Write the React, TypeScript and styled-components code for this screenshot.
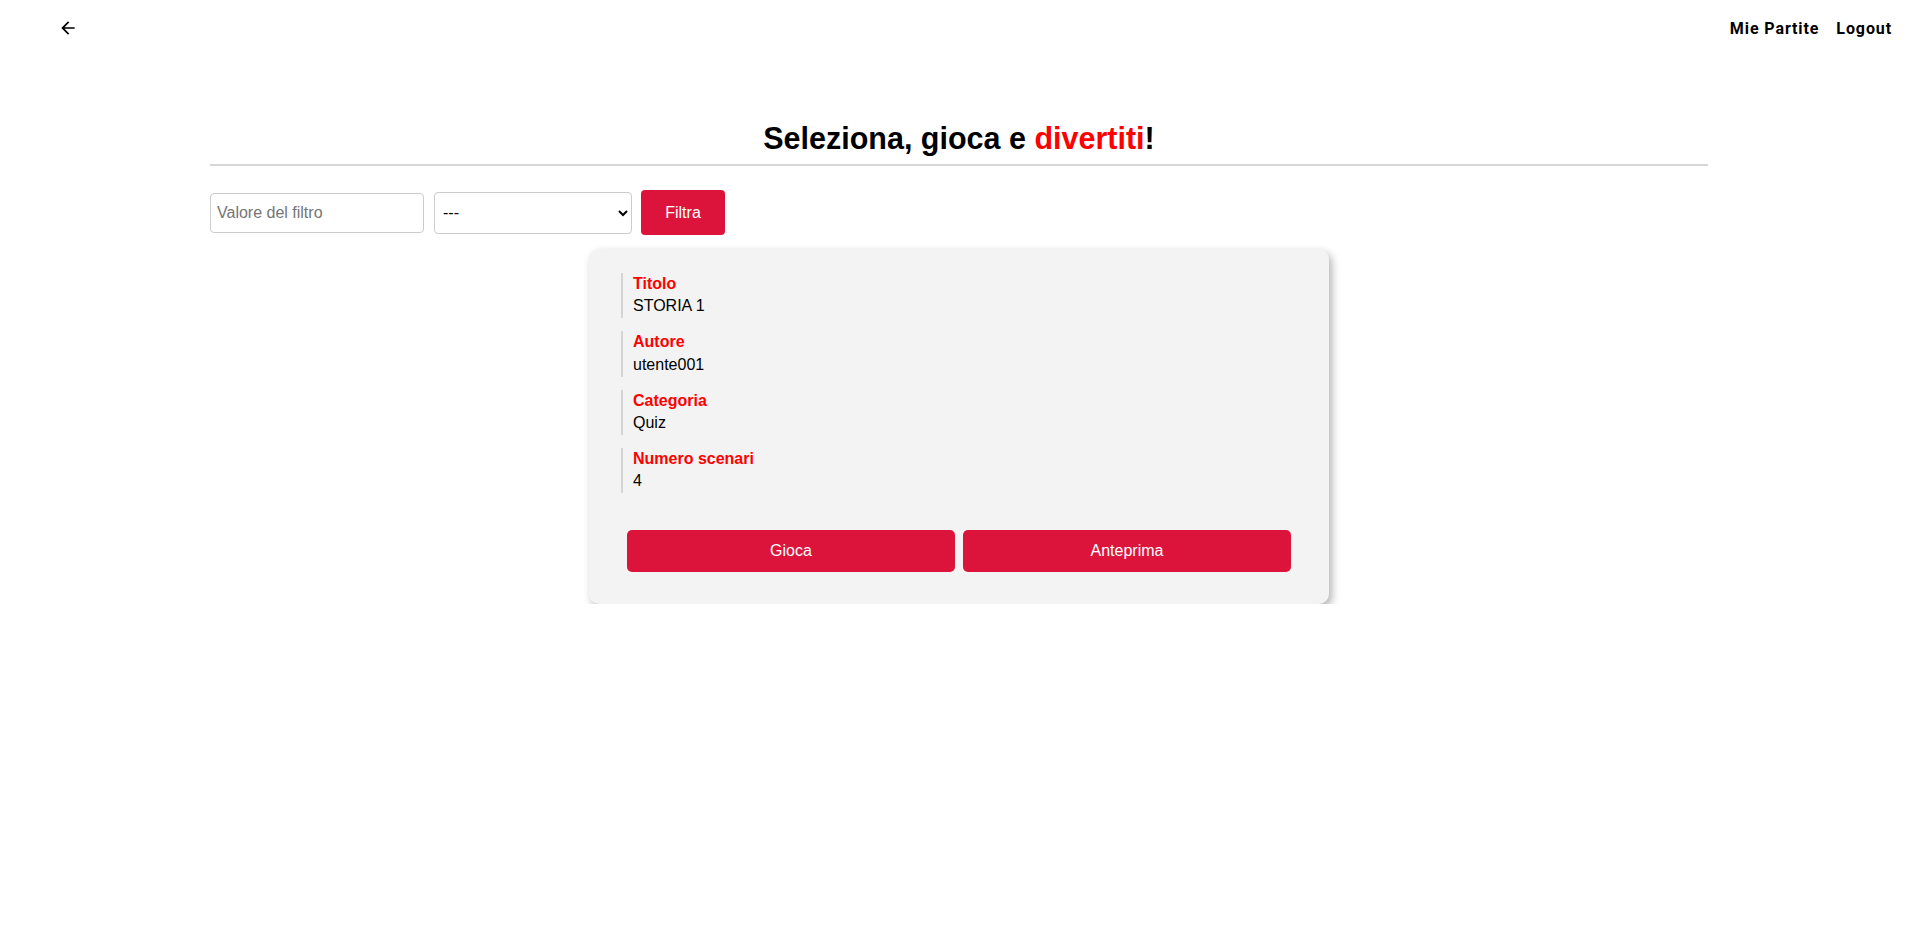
import React from "react";
import styled, { createGlobalStyle } from "styled-components";

const GlobalStyle = createGlobalStyle`
  html, body { margin: 0; padding: 0; background: #ffffff; }
  body { font-family: "Liberation Sans", Arial, sans-serif; color: #000; }
  * { box-sizing: border-box; }
`;

const Header = styled.header`
  height: 56px;
  display: flex;
  align-items: center;
  justify-content: space-between;
  padding: 0 26px 0 58px;
`;

const BackButton = styled.button`
  width: 20px;
  height: 20px;
  padding: 0;
  border: none;
  background: transparent;
  display: flex;
  align-items: center;
  justify-content: center;
  cursor: pointer;
  color: #000;
`;

const Nav = styled.nav`
  display: flex;
  align-items: center;
  gap: 17px;
`;

const NavLink = styled.a`
  font-family: Roboto, "Liberation Sans", sans-serif;
  font-weight: 700;
  font-size: 16px;
  letter-spacing: 0.9px;
  color: #000;
  text-decoration: none;
  cursor: pointer;
`;

const Main = styled.main`
  width: 1498px;
  margin: 0 auto;
`;

const Title = styled.h1`
  margin: 65px 0 0;
  font-size: 30.5px;
  font-weight: 700;
  text-align: center;
  padding-bottom: 8px;
  border-bottom: 2px solid #d6d6d6;
`;

const Accent = styled.span`
  color: #ff0000;
`;

const FilterRow = styled.div`
  margin-top: 24px;
  display: flex;
  align-items: center;
`;

const FilterInput = styled.input`
  width: 214px;
  height: 40px;
  margin-right: 10px;
  padding: 0 6px;
  border: 1px solid #cccccc;
  border-radius: 4px;
  font-family: "Liberation Sans", Arial, sans-serif;
  font-size: 16px;
  color: #000;
  outline: none;
  &::placeholder { color: #757575; }
`;

const FilterSelect = styled.select`
  width: 198px;
  height: 42px;
  margin-right: 9px;
  padding: 0 4px;
  border: 1px solid #cccccc;
  border-radius: 4px;
  background: #fff;
  font-family: "Liberation Sans", Arial, sans-serif;
  font-size: 16px;
  color: #000;
`;

const RedButton = styled.button<{ $wide?: boolean }>`
  background: #dc143c;
  color: #fff;
  border: none;
  border-radius: ${(p) => (p.$wide ? "5px" : "4px")};
  font-family: "Liberation Sans", Arial, sans-serif;
  font-size: 16px;
  cursor: pointer;
  height: ${(p) => (p.$wide ? "42px" : "45px")};
  width: ${(p) => (p.$wide ? "auto" : "84px")};
  flex: ${(p) => (p.$wide ? "1" : "none")};
`;

const Card = styled.section`
  width: 740px;
  margin: 14px auto 0;
  background: #f3f3f3;
  border-radius: 10px;
  box-shadow: 3px 4px 8px rgba(0, 0, 0, 0.3);
  padding: 24px 38px 32px 32px;
`;

const Field = styled.div`
  border-left: 2px solid #d5d5d5;
  padding: 2px 0 3px 10px;
  margin-bottom: 13px;
`;

const FieldLabel = styled.div`
  color: #ff0000;
  font-weight: 700;
  font-size: 16px;
  margin-bottom: 4.3px;
`;

const FieldValue = styled.div`
  color: #000;
  font-size: 16px;
`;

const ButtonRow = styled.div`
  display: flex;
  gap: 8px;
  margin: 37px 0 0 6px;
`;

const fields = [
  { label: "Titolo", value: "STORIA 1" },
  { label: "Autore", value: "utente001" },
  { label: "Categoria", value: "Quiz" },
  { label: "Numero scenari", value: "4" },
];

export default function App() {
  return (
    <>
      <GlobalStyle />
      <Header>
        <BackButton aria-label="Indietro">
          <svg width="20" height="20" viewBox="0 0 24 24" fill="currentColor">
            <path d="M20 11H7.83l5.59-5.59L12 4l-8 8 8 8 1.41-1.41L7.83 13H20v-2z" />
          </svg>
        </BackButton>
        <Nav>
          <NavLink>Mie Partite</NavLink>
          <NavLink>Logout</NavLink>
        </Nav>
      </Header>
      <Main>
        <Title>
          Seleziona, gioca e <Accent>divertiti</Accent>!
        </Title>
        <FilterRow>
          <FilterInput placeholder="Valore del filtro" />
          <FilterSelect defaultValue="">
            <option value="">---</option>
            <option value="titolo">Titolo</option>
            <option value="autore">Autore</option>
            <option value="categoria">Categoria</option>
          </FilterSelect>
          <RedButton>Filtra</RedButton>
        </FilterRow>
        <Card>
          {fields.map((f) => (
            <Field key={f.label}>
              <FieldLabel>{f.label}</FieldLabel>
              <FieldValue>{f.value}</FieldValue>
            </Field>
          ))}
          <ButtonRow>
            <RedButton $wide>Gioca</RedButton>
            <RedButton $wide>Anteprima</RedButton>
          </ButtonRow>
        </Card>
      </Main>
    </>
  );
}
